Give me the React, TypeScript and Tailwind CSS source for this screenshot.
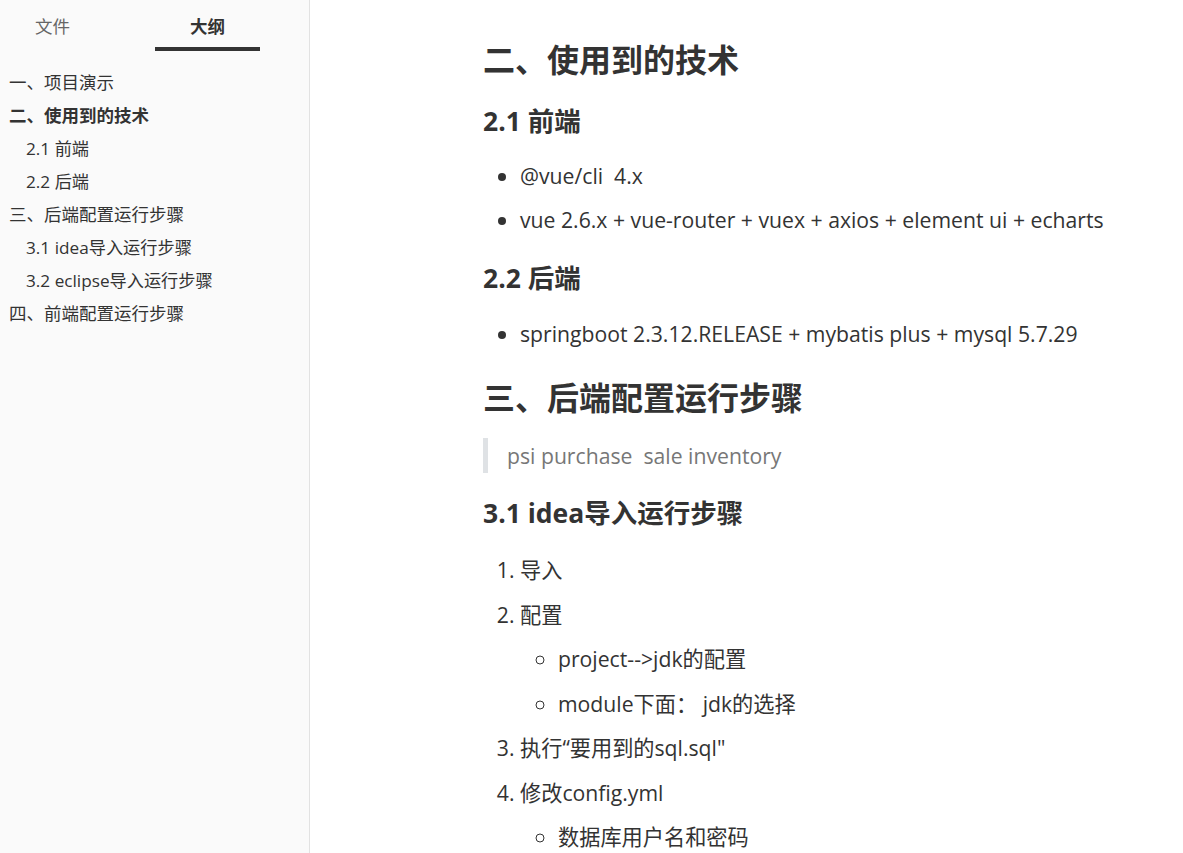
const font = { fontFamily: '"Open Sans", "Noto Sans CJK SC", sans-serif' };

const outline: { text: string; level: number; active?: boolean }[] = [
  { text: '一、项目演示', level: 1 },
  { text: '二、使用到的技术', level: 1, active: true },
  { text: '2.1 前端', level: 2 },
  { text: '2.2 后端', level: 2 },
  { text: '三、后端配置运行步骤', level: 1 },
  { text: '3.1 idea导入运行步骤', level: 2 },
  { text: '3.2 eclipse导入运行步骤', level: 2 },
  { text: '四、前端配置运行步骤', level: 1 },
];

function Sidebar() {
  return (
    <aside className="flex w-[310px] shrink-0 flex-col border-r border-[#e2e2e2] bg-[#fafafa] text-[17.5px] text-[#333]">
      {/* 文件 / 大纲 切换 */}
      <div className="flex h-[51px]">
        <div className="flex w-[105px] items-start justify-center pt-[13px] leading-[26px] text-[#666]">文件</div>
        <div className="ml-[50px] flex w-[105px] flex-col items-center justify-between pt-[13px]">
          <span className="font-bold leading-[26px]">大纲</span>
          <span className="h-[4px] w-full bg-[#333]" />
        </div>
      </div>
      <ul className="mt-[14.5px]">
        {outline.map((o) => (
          <li
            key={o.text}
            className={`h-[33px] leading-[33px] ${o.level === 2 ? 'pl-[26px] text-[17.2px]' : 'pl-[9px]'} ${o.active ? 'font-bold' : ''}`}
          >
            {o.text}
          </li>
        ))}
      </ul>
    </aside>
  );
}

const h1 = 'h-[40px] text-[32px] font-bold leading-[40px]';
const h2 = 'h-[36px] text-[26.5px] font-bold leading-[36px]';
const li = 'h-[44.5px] leading-[44.5px]';

export default function App() {
  return (
    <div className="flex h-[853px] w-full overflow-hidden bg-white" style={font}>
      <Sidebar />
      <main className="flex-1 pl-[173px] text-[21.2px] text-[#333]">
        <h1 className={`mt-[40px] ${h1}`}>二、使用到的技术</h1>
        <h2 className={`mt-[23px] ${h2}`}>2.1 前端</h2>
        <ul className="mt-[14.75px] list-disc pl-[37px]">
          <li className={li}>@vue/cli&nbsp; 4.x</li>
          <li className={li}>vue 2.6.x + vue-router + vuex + axios + element ui + echarts</li>
        </ul>
        <h2 className={`mt-[17.5px] ${h2}`}>2.2 后端</h2>
        <ul className="mt-[15.75px] list-disc pl-[37px]">
          <li className={li}>springboot 2.3.12.RELEASE + mybatis plus + mysql 5.7.29</li>
        </ul>
        <h1 className={`mt-[21.75px] ${h1}`}>三、后端配置运行步骤</h1>
        <blockquote className="mt-[20px] flex h-[35px] items-center border-l-[5px] border-[#dfe2e5] pl-[19px] text-[#777]">
          psi purchase&nbsp; sale inventory
        </blockquote>
        <h2 className={`mt-[22px] ${h2}`}>3.1 idea导入运行步骤</h2>
        <ol className="mt-[16.75px] list-decimal pl-[37px]">
          <li className={li}>导入</li>
          <li>
            <div className={li}>配置</div>
            <ul className="list-[circle] pl-[38px]">
              <li className={li}>project--&gt;jdk的配置</li>
              <li className={li}>module下面： jdk的选择</li>
            </ul>
          </li>
          <li className={li}>执行“要用到的sql.sql"</li>
          <li>
            <div className={li}>修改config.yml</div>
            <ul className="list-[circle] pl-[38px]">
              <li className={li}>数据库用户名和密码</li>
            </ul>
          </li>
        </ol>
      </main>
    </div>
  );
}
